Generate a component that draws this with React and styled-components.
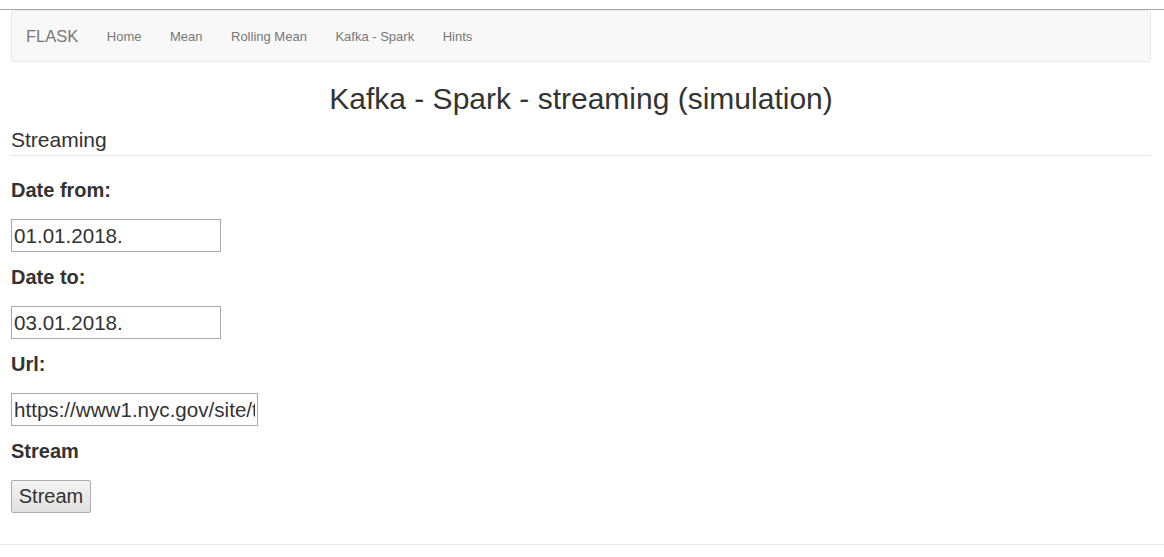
import styled, { createGlobalStyle } from 'styled-components';

const GlobalStyle = createGlobalStyle`
	body {
		margin: 0;
		background: #fff;
		color: #333;
		font-family: 'Liberation Sans', Arial, sans-serif;
	}
`;

const TopEdge = styled.div`
	height: 9px;
	border-bottom: 1px solid #a6a6a6;
`;

const Container = styled.div`
	width: 1140px;
	margin-left: 11px;
`;

const Navbar = styled.nav`
	display: flex;
	align-items: center;
	height: 50px;
	padding: 0 14px;
	background: #f8f8f8;
	border: 1px solid #e7e7e7;
	border-top-color: #ececec;
	border-radius: 4px;
`;

const Brand = styled.a`
	font-size: 16.5px;
	line-height: 20px;
	color: #777;
	text-decoration: none;
	padding-right: 14px;
`;

const NavLink = styled.a`
	font-size: 13px;
	line-height: 21px;
	color: #777;
	text-decoration: none;
	padding: 0 14px 0 14.5px;
`;

const Title = styled.h2`
	margin: 20px 0 10px;
	font-size: 30px;
	line-height: 33px;
	font-weight: normal;
	text-align: center;
	color: #333;
`;

const Fieldset = styled.fieldset`
	margin: 0;
	padding: 0;
	border: 0;
`;

const Legend = styled.legend`
	display: block;
	width: 100%;
	padding: 0;
	margin-bottom: 22px;
	font-size: 21px;
	line-height: 30px;
	color: #333;
	border-bottom: 1px solid #e5e5e5;
`;

const Label = styled.label`
	display: block;
	font-size: 20px;
	line-height: 24px;
	font-weight: bold;
	color: #333;
	margin-bottom: 17px;
`;

const Input = styled.input`
	display: block;
	box-sizing: border-box;
	width: ${(props) => props.width || '210px'};
	height: 33px;
	margin: 0 0 13px;
	padding: 1px 2px;
	font-family: 'Liberation Sans', Arial, sans-serif;
	font-size: 20.6px;
	color: #333;
	background: #fff;
	border: 1px solid #a9a9a9;
	border-radius: 0;
	outline: none;
`;

const Button = styled.button`
	box-sizing: border-box;
	width: 80px;
	height: 33px;
	padding: 0 6px;
	font-family: 'Liberation Sans', Arial, sans-serif;
	font-size: 20px;
	color: #333;
	background: linear-gradient(#f3f3f3, #e1e1e1);
	border: 1px solid #adadad;
	border-radius: 2px;
`;

const Rule = styled.hr`
	margin: 31px 0 0;
	border: 0;
	border-top: 1px solid #eaeaea;
`;

const links = ['Home', 'Mean', 'Rolling Mean', 'Kafka - Spark', 'Hints'];

const fields = [
	{ label: 'Date from:', value: '01.01.2018.' },
	{ label: 'Date to:', value: '03.01.2018.' },
	{
		label: 'Url:',
		value: 'https://www1.nyc.gov/site/tlc/about/tlc-trip-record-data.page',
		width: '247px',
	},
];

export default function App() {
	return (
		<>
			<GlobalStyle />
			<TopEdge />
			<Container>
				<Navbar>
					<Brand href="#">FLASK</Brand>
					{links.map((link) => (
						<NavLink key={link} href="#">
							{link}
						</NavLink>
					))}
				</Navbar>
				<Title>Kafka - Spark - streaming (simulation)</Title>
				<Fieldset>
					<Legend>Streaming</Legend>
					{fields.map((f) => (
						<div key={f.label}>
							<Label>{f.label}</Label>
							<Input type="text" defaultValue={f.value} width={f.width} />
						</div>
					))}
					<Label>Stream</Label>
					<Button type="button">Stream</Button>
				</Fieldset>
			</Container>
			<Rule />
		</>
	);
}
